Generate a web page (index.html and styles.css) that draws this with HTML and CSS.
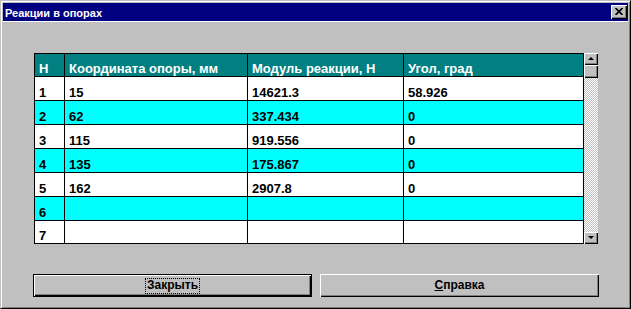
FILE: index.html
```html
<!DOCTYPE html>
<html lang="ru">
<head>
<meta charset="utf-8">
<title>Реакции в опорах</title>
<link rel="stylesheet" href="styles.css">
</head>
<body>
<div class="window">
  <div class="titlebar">
    <span class="title">Реакции в опорах</span>
    <div class="close"><svg width="8" height="7" viewBox="0 0 8 7"><path d="M0.5 0L7.5 7M7.5 0L0.5 7" stroke="#000" stroke-width="1.7"/></svg></div>
  </div>
  <div class="client">
    <div class="gridbox">
      <div class="grid">
        <div class="row head"><div class="c">Н</div><div class="c">Координата опоры, мм</div><div class="c">Модуль реакции, Н</div><div class="c">Угол, град</div></div>
        <div class="row"><div class="c">1</div><div class="c">15</div><div class="c">14621.3</div><div class="c">58.926</div></div>
        <div class="row alt"><div class="c">2</div><div class="c">62</div><div class="c">337.434</div><div class="c">0</div></div>
        <div class="row"><div class="c">3</div><div class="c">115</div><div class="c">919.556</div><div class="c">0</div></div>
        <div class="row alt"><div class="c">4</div><div class="c">135</div><div class="c">175.867</div><div class="c">0</div></div>
        <div class="row"><div class="c">5</div><div class="c">162</div><div class="c">2907.8</div><div class="c">0</div></div>
        <div class="row alt"><div class="c">6</div><div class="c"></div><div class="c"></div><div class="c"></div></div>
        <div class="row"><div class="c">7</div><div class="c"></div><div class="c"></div><div class="c"></div></div>
      </div>
      <div class="scrollbar">
        <div class="sbtn"><span class="arrow up"></span></div>
        <div class="thumb"></div>
        <div class="track"></div>
        <div class="sbtn"><span class="arrow down"></span></div>
      </div>
    </div>
    <div class="buttons">
      <div class="btn default"><span class="focus">Закрыть</span></div>
      <div class="btn"><span><u>С</u>правка</span></div>
    </div>
  </div>
</div>
</body>
</html>
```
FILE: styles.css
```css
* { box-sizing: border-box; }
html, body { margin: 0; padding: 0; }
body {
  width: 631px;
  height: 309px;
  overflow: hidden;
  background: #c0c0c0;
  font-family: "Liberation Sans", Arial, sans-serif;
}
.window {
  width: 631px;
  height: 309px;
  border: 1px solid;
  border-color: #c0c0c0 #000 #000 #c0c0c0;
  box-shadow: inset 1px 1px #fff, inset -1px -1px #808080;
  padding: 2px;
  display: flex;
  flex-direction: column;
}
.titlebar {
  height: 18px;
  flex: none;
  background: #000080;
  display: flex;
  align-items: center;
  justify-content: space-between;
  padding: 0 1px 0 2px;
}
.title {
  color: #fff;
  font-weight: bold;
  font-size: 11px;
  line-height: 14px;
  padding-top: 1px;
}
.close {
  width: 16px;
  height: 14px;
  background: #c0c0c0;
  box-shadow: inset 1px 1px #fff, inset -1px -1px #000, inset -2px -2px #808080;
  display: flex;
  align-items: center;
  justify-content: center;
  padding: 0 1px 1px 0;
}
.close svg { display: block; }
.client {
  flex: 1;
  border-top: 1px solid #fff;
  padding: 31px 0 0 31px;
}
.gridbox { display: flex; }
.grid {
  display: grid;
  grid-template-columns: 29px 182px 155px 179px;
  grid-template-rows: 22px repeat(6, 23px) 22px;
  gap: 1px;
  background: #000;
  border: 1px solid #000;
  font-weight: bold;
  font-size: 13px;
}
.row { display: contents; }
.c {
  background: #fff;
  color: #000;
  display: flex;
  align-items: flex-end;
  padding: 0 4px 0 4px;
  line-height: 14px;
  white-space: nowrap;
  overflow: hidden;
}
.row.alt .c { background: #00ffff; }
.row.head .c { background: #008080; color: #fff; }
.scrollbar {
  width: 14px;
  height: 191px;
  display: flex;
  flex-direction: column;
}
.sbtn, .thumb {
  height: 12px;
  flex: none;
  background: #c0c0c0;
  box-shadow: inset 1px 1px #fff, inset -1px -1px #000, inset -2px -2px #808080;
  display: flex;
  align-items: center;
  justify-content: center;
  padding: 0 1px 1px 0;
}
.thumb { height: 13px; }
.track {
  flex: 1;
  background: repeating-conic-gradient(#c0c0c0 0 25%, #fff 0 50%) 0 0 / 2px 2px;
}
.arrow {
  width: 0;
  height: 0;
  border-left: 3px solid transparent;
  border-right: 3px solid transparent;
}
.arrow.up { border-bottom: 3px solid #000; }
.arrow.down { border-top: 3px solid #000; }
.buttons {
  display: flex;
  gap: 8px;
  margin: 30px 0 0 -1px;
}
.btn {
  width: 279px;
  height: 23px;
  background: #c0c0c0;
  color: #000;
  font-weight: bold;
  font-size: 12px;
  line-height: 13px;
  display: flex;
  align-items: center;
  justify-content: center;
  box-shadow: inset 1px 1px #fff, inset -1px -1px #000, inset -2px -2px #808080;
}
.btn.default {
  border: 1px solid #000;
}
.focus {
  border: 1px dotted #000;
  padding: 0 1px 1px;
}
```
